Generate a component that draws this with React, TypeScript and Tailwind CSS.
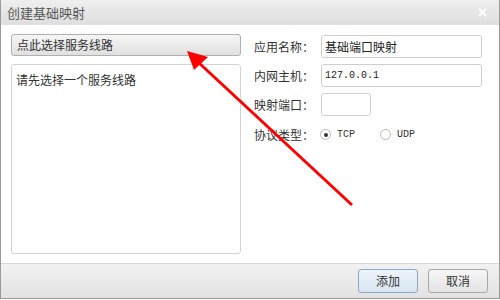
const font = { fontFamily: '"Noto Sans CJK SC", "Liberation Sans", sans-serif' };
const mono = { fontFamily: '"Liberation Mono", "Noto Sans CJK SC", monospace' };

function Field({ label, value, width }: { label: string; value?: string; width: string }) {
  return (
    <div className="flex items-center h-[23px]">
      <span className="w-[67px] shrink-0 text-[12px] text-[#333]">{label}</span>
      <div className={`${width} h-[23px] border border-[#cfcfcf] rounded-[3px] bg-white flex items-center px-[3px] text-[12px] text-[#222]`}>
        {value}
      </div>
    </div>
  );
}

function Radio({ checked, label }: { checked?: boolean; label: string }) {
  return (
    <div className="flex items-center gap-[6px]">
      <span className="w-[11px] h-[11px] rounded-full border border-[#b8b8b8] bg-white flex items-center justify-center">
        {checked && <span className="w-[4px] h-[4px] rounded-full bg-[#333]" />}
      </span>
      <span className="text-[10px] text-[#333]" style={mono}>{label}</span>
    </div>
  );
}

export default function App() {
  return (
    <div className="relative w-[500px] h-[300px] bg-white overflow-hidden" style={font}>
      <div className="flex flex-col w-[500px] h-[299px] border-l border-r border-b border-[#9a9a9a]">
        <div className="h-[25px] shrink-0 flex items-center justify-between pl-[6px] pr-[12px] bg-gradient-to-b from-[#efefef] to-[#dedede]">
          <span className="text-[13px] text-[#555]">创建基础映射</span>
          <svg width="9" height="9" viewBox="0 0 9 9">
            <path d="M1 1L8 8M8 1L1 8" stroke="#fff" strokeWidth="2" />
          </svg>
        </div>

        <div className="flex flex-1 pl-[10px] pt-[9px] pb-[9px]">
          <div className="w-[230px] flex flex-col gap-[8px]">
            <div className="h-[22px] border border-[#b0b0b0] rounded-[3px] bg-gradient-to-b from-[#f6f6f6] to-[#e0e0e0] flex items-center px-[5px] text-[12px] text-[#333]">
              点此选择服务线路
            </div>
            <div className="flex-1 border border-[#d4d4d4] rounded-[3px] bg-white px-[4px] pt-[6px] text-[12px] text-[#333]">
              请先选择一个服务线路
            </div>
          </div>

          <div className="flex flex-col pl-[13px] pt-[1px] gap-[6px]">
            <Field label="应用名称：" value="基础端口映射" width="w-[161px]" />
            <div className="flex items-center h-[23px]">
              <span className="w-[67px] shrink-0 text-[12px] text-[#333]">内网主机：</span>
              <div className="w-[161px] h-[23px] border border-[#cfcfcf] rounded-[3px] bg-white flex items-center px-[3px] text-[10px] text-[#222]" style={mono}>
                127.0.0.1
              </div>
            </div>
            <Field label="映射端口：" width="w-[50px]" />
            <div className="flex items-center h-[25px]">
              <span className="w-[66px] shrink-0 text-[12px] text-[#333]">协议类型：</span>
              <div className="flex items-center gap-[25px]">
                <Radio checked label="TCP" />
                <Radio label="UDP" />
              </div>
            </div>
          </div>
        </div>

        <div className="h-[35px] shrink-0 border-t border-[#d6d6d6] bg-gradient-to-b from-[#f2f2f2] to-[#e2e2e2] flex items-start justify-end gap-[10px] pt-[5px] pr-[11px]">
          <div className="w-[60px] h-[24px] rounded-[3px] border border-[#8aa8c8] bg-gradient-to-b from-[#eef4fa] to-[#d9e5f1] flex items-center justify-center text-[12px] text-[#333]">
            添加
          </div>
          <div className="w-[60px] h-[24px] rounded-[3px] border border-[#a8a8a8] bg-gradient-to-b from-[#f6f6f6] to-[#e4e4e4] flex items-center justify-center text-[12px] text-[#333]">
            取消
          </div>
        </div>
      </div>

      <svg className="absolute left-0 top-0 pointer-events-none" width="500" height="300">
        <line x1="352" y1="205" x2="198" y2="62" stroke="#ff0000" strokeWidth="3" />
        <polygon points="187,51 194,70 208,57" fill="#ff0000" />
      </svg>
    </div>
  );
}
